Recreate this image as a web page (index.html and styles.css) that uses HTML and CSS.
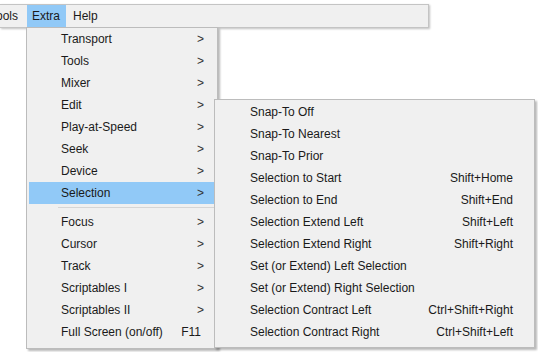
FILE: index.html
```html
<!DOCTYPE html>
<html lang="en">
<head>
  <meta charset="UTF-8">
  <title>Extra menu</title>
  <link rel="stylesheet" href="styles.css">
</head>
<body>
  <div class="menubar">
    <span class="menubar-item first">Tools</span>
    <span class="menubar-item active">Extra</span>
    <span class="menubar-item">Help</span>

    <div class="menu menu-extra">
      <div class="menu-item"><span>Transport</span><span class="arrow">&gt;</span></div>
      <div class="menu-item"><span>Tools</span><span class="arrow">&gt;</span></div>
      <div class="menu-item"><span>Mixer</span><span class="arrow">&gt;</span></div>
      <div class="menu-item"><span>Edit</span><span class="arrow">&gt;</span></div>
      <div class="menu-item"><span>Play-at-Speed</span><span class="arrow">&gt;</span></div>
      <div class="menu-item"><span>Seek</span><span class="arrow">&gt;</span></div>
      <div class="menu-item"><span>Device</span><span class="arrow">&gt;</span></div>
      <div class="menu-item selected"><span>Selection</span><span class="arrow">&gt;</span></div>
      <div class="menu-sep"></div>
      <div class="menu-item"><span>Focus</span><span class="arrow">&gt;</span></div>
      <div class="menu-item"><span>Cursor</span><span class="arrow">&gt;</span></div>
      <div class="menu-item"><span>Track</span><span class="arrow">&gt;</span></div>
      <div class="menu-item"><span>Scriptables I</span><span class="arrow">&gt;</span></div>
      <div class="menu-item"><span>Scriptables II</span><span class="arrow">&gt;</span></div>
      <div class="menu-item"><span>Full Screen (on/off)</span><span class="key">F11</span></div>
    </div>

    <div class="menu menu-selection">
      <div class="menu-item"><span>Snap-To Off</span></div>
      <div class="menu-item"><span>Snap-To Nearest</span></div>
      <div class="menu-item"><span>Snap-To Prior</span></div>
      <div class="menu-item"><span>Selection to Start</span><span class="key">Shift+Home</span></div>
      <div class="menu-item"><span>Selection to End</span><span class="key">Shift+End</span></div>
      <div class="menu-item"><span>Selection Extend Left</span><span class="key">Shift+Left</span></div>
      <div class="menu-item"><span>Selection Extend Right</span><span class="key">Shift+Right</span></div>
      <div class="menu-item"><span>Set (or Extend) Left Selection</span></div>
      <div class="menu-item"><span>Set (or Extend) Right Selection</span></div>
      <div class="menu-item"><span>Selection Contract Left</span><span class="key">Ctrl+Shift+Right</span></div>
      <div class="menu-item"><span>Selection Contract Right</span><span class="key">Ctrl+Shift+Left</span></div>
    </div>
  </div>
</body>
</html>
```

FILE: styles.css
```css
* {
  box-sizing: border-box;
  margin: 0;
  padding: 0;
}

body {
  background-color: #ffffff;
  font-family: 'Liberation Sans', Arial, sans-serif;
  font-size: 12px;
  color: #1a1a1a;
  width: 538px;
  height: 352px;
  overflow: hidden;
}

/* menu bar across the top */
.menubar {
  position: relative;
  display: flex;
  width: 429px;
  height: 24px;
  margin-top: 4px;
  background-color: #f0f0f0;
  border: 1px solid #c4c4c4;
  border-left: none;
  box-shadow: 1px 1px 2px rgba(0, 0, 0, 0.25);
}

.menubar-item {
  display: flex;
  align-items: center;
  padding: 1px 6px 0 5px;
  line-height: 21px;
}

.menubar-item.first {
  margin-left: -15px;
  margin-right: 3px;
}

.menubar-item.active {
  background-color: #91c9f7;
  margin-right: 2px;
}

/* drop-down menus */
.menu {
  position: absolute;
  background-color: #f0f0f0;
  border: 1px solid #bcbcbc;
  box-shadow: 2px 2px 2px rgba(0, 0, 0, 0.28);
  padding: 0 0 5px;
}

.menu-extra {
  left: 26px;
  top: 22px;
  width: 192px;
}

.menu-selection {
  left: 214px;
  top: 94px;
  width: 321px;
  z-index: 2;
}

.menu-item {
  display: flex;
  justify-content: space-between;
  align-items: center;
  height: 22px;
  margin: 0 2px;
  padding: 0 10px 0 32px;
}

.menu-selection .menu-item {
  padding: 1px 19px 0 33px;
}

.menu-item.selected {
  background-color: #91c9f7;
}

.arrow {
  padding-right: 1px;
  color: #333333;
}

.key {
  padding-right: 4px;
}

.menu-selection .key {
  padding-right: 0;
}

.menu-sep {
  height: 1px;
  margin: 3px 3px 3px 31px;
  background-color: #d5d5d5;
}
```
